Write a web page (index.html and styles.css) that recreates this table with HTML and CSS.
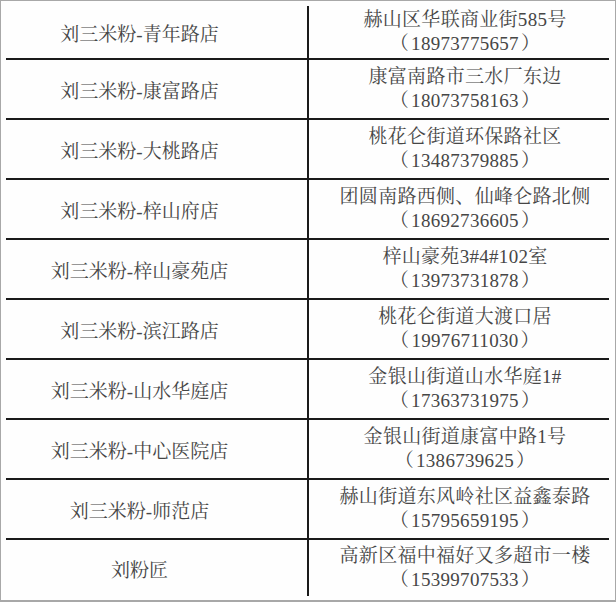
FILE: index.html
```html
<!DOCTYPE html>
<html lang="zh-CN">
<head>
<meta charset="utf-8">
<title>刘三米粉门店</title>
<link rel="stylesheet" href="styles.css">
</head>
<body>
<div class="frame">
  <div class="table">
    <div class="row first"><div class="name">刘三米粉-青年路店</div><div class="addr"><span>赫山区华联商业街585号</span><span>（ 18973775657 ）</span></div></div>
    <div class="row"><div class="name">刘三米粉-康富路店</div><div class="addr"><span>康富南路市三水厂东边</span><span>（ 18073758163 ）</span></div></div>
    <div class="row"><div class="name">刘三米粉-大桃路店</div><div class="addr"><span>桃花仑街道环保路社区</span><span>（ 13487379885 ）</span></div></div>
    <div class="row"><div class="name">刘三米粉-梓山府店</div><div class="addr"><span>团圆南路西侧、仙峰仑路北侧</span><span>（ 18692736605 ）</span></div></div>
    <div class="row"><div class="name">刘三米粉-梓山豪苑店</div><div class="addr"><span>梓山豪苑3#4#102室</span><span>（ 13973731878 ）</span></div></div>
    <div class="row"><div class="name">刘三米粉-滨江路店</div><div class="addr"><span>桃花仑街道大渡口居</span><span>（ 19976711030 ）</span></div></div>
    <div class="row"><div class="name">刘三米粉-山水华庭店</div><div class="addr"><span>金银山街道山水华庭1#</span><span>（ 17363731975 ）</span></div></div>
    <div class="row"><div class="name">刘三米粉-中心医院店</div><div class="addr"><span>金银山街道康富中路1号</span><span>（ 1386739625 ）</span></div></div>
    <div class="row"><div class="name">刘三米粉-师范店</div><div class="addr"><span>赫山街道东风岭社区益鑫泰路</span><span>（ 15795659195 ）</span></div></div>
    <div class="row last"><div class="name">刘粉匠</div><div class="addr"><span>高新区福中福好又多超市一楼</span><span>（ 15399707533 ）</span></div></div>
  </div>
</div>
</body>
</html>
```

FILE: styles.css
```css
* { box-sizing: border-box; }
html, body { margin: 0; padding: 0; background: #ffffff; }
.frame {
  width: 616px;
  height: 602px;
  border: 1px solid #a8a8a8;
  border-bottom-width: 2px;
  background: #fefefe;
  padding: 5px 0 0 5px;
  font-family: "Liberation Serif", "Noto Serif CJK SC", "Noto Sans CJK SC", serif;
  font-size: 19px;
  color: #464646;
}
.table {
  width: 603px;
  display: flex;
  flex-direction: column;
}
.row {
  display: grid;
  grid-template-columns: 303px 300px;
  height: 60px;
  border-bottom: 2px solid #1a1a1a;
}
.row.first { height: 54px; }
.row.last { height: 56px; border-bottom: none; }
.name {
  display: flex;
  align-items: center;
  justify-content: center;
  padding-right: 34px;
  border-right: 2px solid #1a1a1a;
}
.addr {
  display: flex;
  flex-direction: column;
  align-items: center;
  justify-content: center;
  padding-left: 12px;
  line-height: 24px;
  letter-spacing: 0.3px;
}
.addr span:last-child {
  word-spacing: -3px;
}
```
